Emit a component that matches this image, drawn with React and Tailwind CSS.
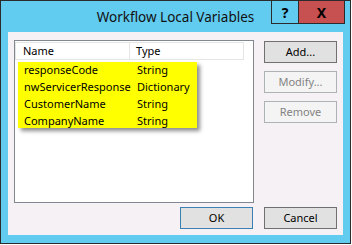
import React from 'react';

const variables = [
    { name: 'responseCode', type: 'String' },
    { name: 'nwServicerResponse', type: 'Dictionary' },
    { name: 'CustomerName', type: 'String' },
    { name: 'CompanyName', type: 'String' },
];

function DlgButton({ children, disabled, focused }) {
    const tone = disabled
        ? 'bg-[#f4f4f4] border-[#adb2b5] text-[#838383]'
        : focused
            ? 'bg-[#e1e1e1] border-[#3c7fb1] text-black'
            : 'bg-[#e1e1e1] border-[#707070] text-black';
    return (
        <div className={`w-[73px] h-[22px] border flex items-center justify-center text-[11px] ${tone}`}>
            {children}
        </div>
    );
}

export default function App() {
    return (
        <div className="w-[352px] h-[245px] bg-white relative font-['Noto_Sans',sans-serif]">
            {/* Window frame */}
            <div className="w-[351px] h-[244px] border border-[#2b2b2b] bg-[#61cbf0] flex flex-col">
                {/* Title bar */}
                <div className="h-[31px] flex items-center justify-center pt-[2px]">
                    <span className="text-[13.5px] text-[#111]">Workflow Local Variables</span>
                </div>

                {/* Client area */}
                <div className="mx-[7px] h-[203px] bg-[#f5f1f5] pl-[6px] pt-[8px] flex flex-col">
                    <div className="flex gap-[10px]">
                        {/* List view */}
                        <div className="w-[240px] h-[163px] border border-[#828790] bg-white pt-[1px] text-[11px] text-black">
                            <div className="flex h-[18px]">
                                <div className="w-[115px] h-full border border-[#e5e5e5] flex items-center pl-[7px]">Name</div>
                                <div className="w-[114px] h-full border border-l-0 border-[#e5e5e5] flex items-center pl-[6px]">Type</div>
                            </div>
                            <div className="ml-[3px] mt-[2px] w-[179px] h-[66px] bg-[#ffff00] shadow-[3px_3px_4px_rgba(0,0,0,0.45)]">
                                {variables.map((v) => (
                                    <div key={v.name} className="flex h-[17px] items-center">
                                        <span className="w-[119px] pl-[6px]">{v.name}</span>
                                        <span>{v.type}</span>
                                    </div>
                                ))}
                            </div>
                        </div>

                        {/* Side buttons */}
                        <div className="flex flex-col gap-[8px] pt-[1px]">
                            <DlgButton>Add...</DlgButton>
                            <DlgButton disabled>Modify...</DlgButton>
                            <DlgButton disabled>Remove</DlgButton>
                        </div>
                    </div>

                    {/* Bottom buttons */}
                    <div className="flex gap-[11px] mt-[4px] ml-[166px]">
                        <DlgButton focused>OK</DlgButton>
                        <DlgButton>Cancel</DlgButton>
                    </div>
                </div>
            </div>

            {/* Caption buttons */}
            <div className="absolute top-0 left-[271px] h-[24px] flex border border-[#2b2b2b]">
                <div className="w-[27px] bg-[#61cbf0] border-r border-[#2b2b2b] flex items-center justify-center text-[14px] font-bold text-black">?</div>
                <div className="w-[45px] bg-[#c75050] flex items-center justify-center text-[14px] font-bold text-black">X</div>
            </div>
        </div>
    );
}
